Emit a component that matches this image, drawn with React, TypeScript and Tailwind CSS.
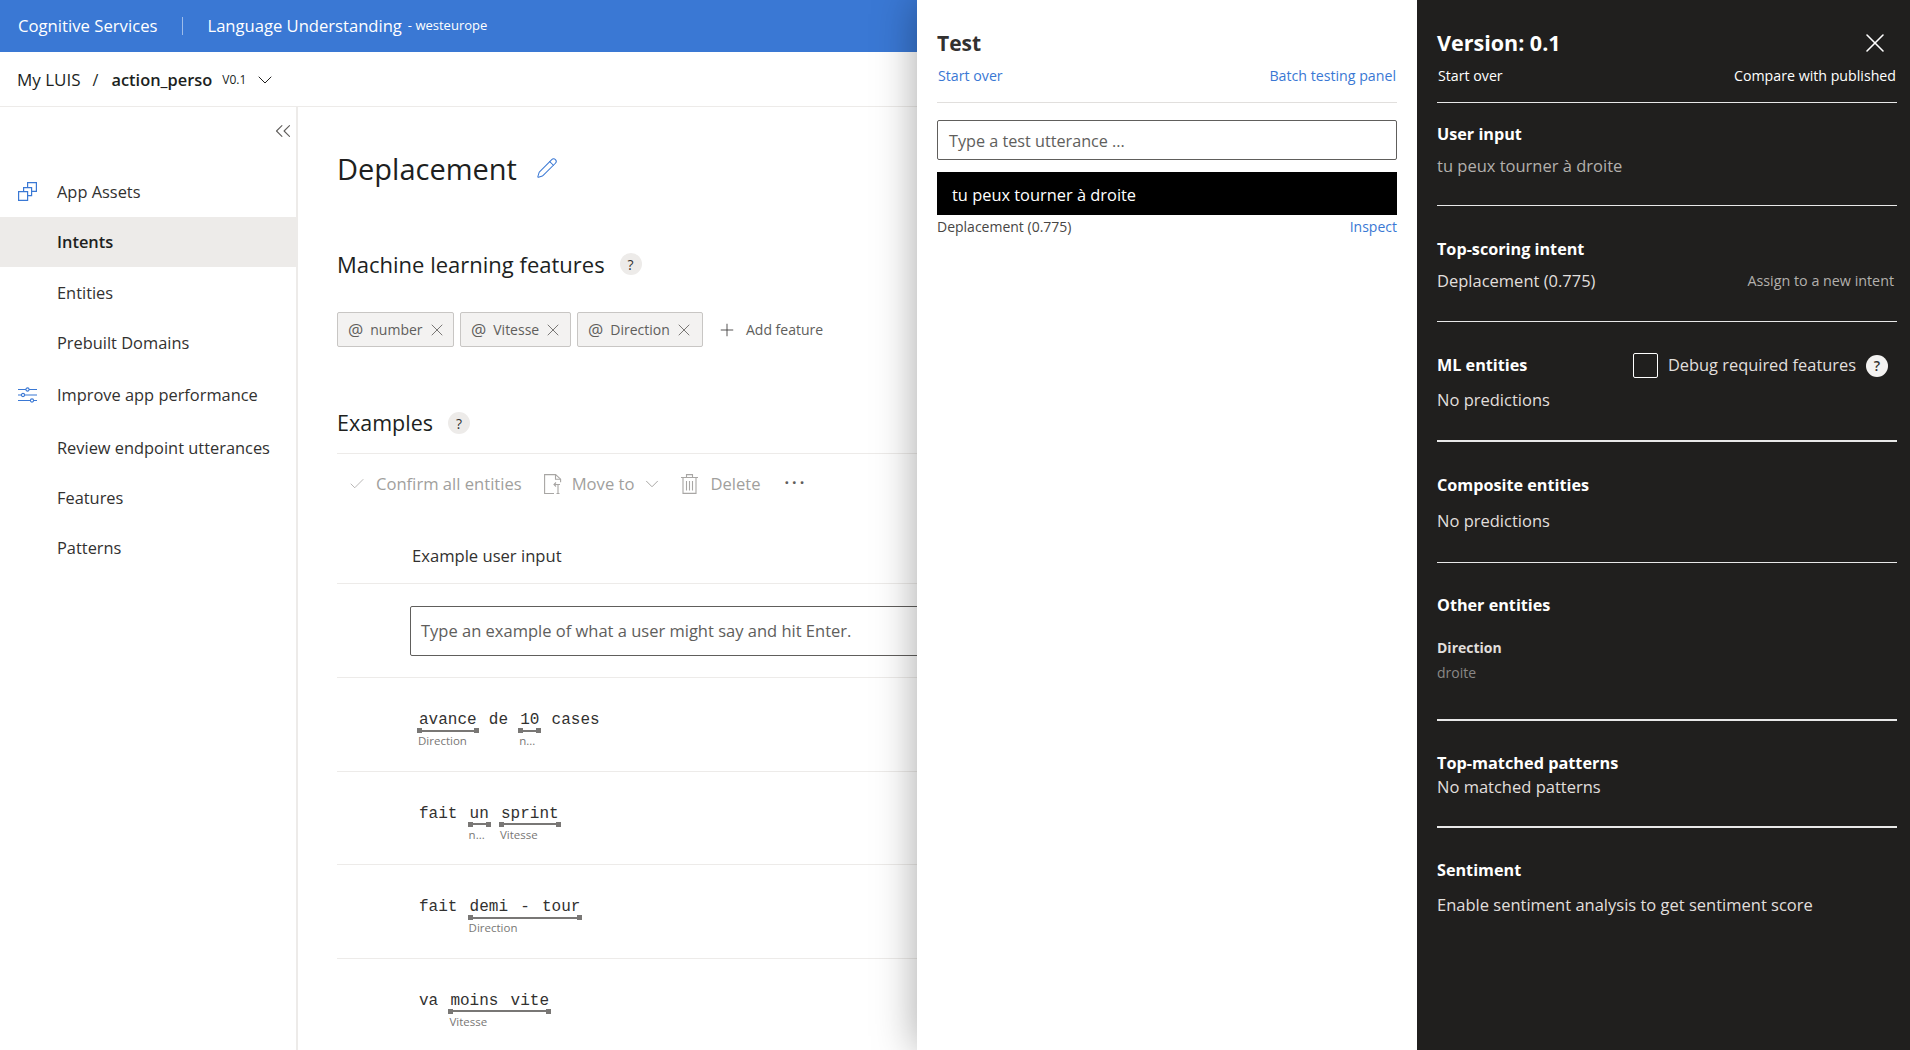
import { Check, ChevronDown, ChevronsLeft, Pencil, Plus, X } from "lucide-react";

type Segment = { words: string[]; label?: string };

const examples: Segment[][] = [
  [{ words: ["avance"], label: "Direction" }, { words: ["de"] }, { words: ["10"], label: "n..." }, { words: ["cases"] }],
  [{ words: ["fait"] }, { words: ["un"], label: "n..." }, { words: ["sprint"], label: "Vitesse" }],
  [{ words: ["fait"] }, { words: ["demi", "-", "tour"], label: "Direction" }],
  [{ words: ["va"] }, { words: ["moins", "vite"], label: "Vitesse" }],
];

function Help({ dark = false }: { dark?: boolean }) {
  return (
    <span
      className={
        dark
          ? "flex size-[22px] items-center justify-center rounded-full bg-[#f3f2f1] text-[14px] font-semibold text-[#323130]"
          : "flex size-[22px] items-center justify-center rounded-full bg-[#edebe9] text-[14px] text-[#323130]"
      }
    >
      ?
    </span>
  );
}

function AssetsIcon() {
  return (
    <svg viewBox="0 0 19 19" className="size-[19px]" fill="none" stroke="#3a78d4" strokeWidth="1.2" aria-hidden="true">
      <path d="M.6 9.6h9v8.8h-9z" />
      <path d="M5.6 9.6V5.6h8v8h-4" />
      <path d="M9.6 5.6V.6h8.8v8.8h-4.8" />
    </svg>
  );
}

function TuneIcon() {
  return (
    <svg viewBox="0 0 19 16" className="h-[16px] w-[19px]" fill="none" stroke="#3a78d4" strokeWidth="1.1" aria-hidden="true">
      <path d="M0 2.5h8M11 2.5h8M0 8h3.5M6.5 8H19M0 13.5h12.5M15.5 13.5H19" />
      <circle cx="9.5" cy="2.5" r="1.6" />
      <circle cx="5" cy="8" r="1.6" />
      <circle cx="14" cy="13.5" r="1.6" />
    </svg>
  );
}

function MoveIcon() {
  return (
    <svg viewBox="0 0 18 20" className="h-[20px] w-[18px]" fill="none" stroke="#a8a6a4" strokeWidth="1.1" aria-hidden="true">
      <path d="M10 19.5H.6V.6h11l5 4.6v3" />
      <path d="M11.5.6v4.6h5" />
      <path d="M14 19.5v-9M10.5 10.5H16M12 8.5l-2 2 2 2M12.5 19.5h3" />
    </svg>
  );
}

function TrashIcon() {
  return (
    <svg viewBox="0 0 17 20" className="h-[20px] w-[17px]" fill="none" stroke="#a8a6a4" strokeWidth="1.1" aria-hidden="true">
      <path d="M0 3.5h17M5.5 3.5V.6h6v2.9M2 3.5v15.9h13V3.5M5.5 7v9.5M8.5 7v9.5M11.5 7v9.5" />
    </svg>
  );
}

function Chip({ label, className }: { label: string; className: string }) {
  return (
    <div className={`flex h-[35px] items-center rounded-[2px] border border-[#c8c6c4] bg-[#f3f2f1] pl-[10px] text-[#605e5c] ${className}`}>
      <span className="text-[17px] leading-none">@</span>
      <span className="ml-[7px] text-[14px]">{label}</span>
      <X className="ml-[4px] size-[20px] text-[#605e5c]" strokeWidth={1} />
    </div>
  );
}

function ExampleRow({ segments, last }: { segments: Segment[]; last?: boolean }) {
  return (
    <div className={`flex h-[93.6px] items-start gap-[12.2px] pl-[82px] pt-[31px] ${last ? "" : "border-b border-[#edebe9]"}`}>
      {segments.map((segment, i) => (
        <div key={i} className="flex flex-col">
          <div className="flex h-[22px] gap-[12.2px] font-['Liberation_Mono',monospace] text-[16px] leading-[22px] text-[#323130]">
            {segment.words.map((word, j) => (
              <span key={j}>{word}</span>
            ))}
          </div>
          {segment.label && (
            <>
              <div className="-mx-[2px] -mt-[3px] flex h-[5px] items-center">
                <span className="size-[5px] bg-[#797775]" />
                <span className="h-[2px] flex-1 bg-[#797775]" />
                <span className="size-[5px] bg-[#797775]" />
              </div>
              <span className="-ml-[1px] mt-[1px] w-0 whitespace-nowrap text-[11.5px] leading-[14px] text-[#797775]">{segment.label}</span>
            </>
          )}
        </div>
      ))}
    </div>
  );
}

function NavItem({ label, className = "", icon, active }: { label: string; className?: string; icon?: React.ReactNode; active?: boolean }) {
  return (
    <div className={`flex h-[50px] items-center ${active ? "bg-[#edebe9] font-semibold text-[#201f1e]" : "text-[#323130]"} ${className}`}>
      <span className="flex w-[57px] justify-start pl-[18px]">{icon}</span>
      <span className="pt-[1px] text-[16.4px]">{label}</span>
    </div>
  );
}

function Sidebar() {
  return (
    <aside className="flex w-[298px] shrink-0 flex-col border-r-2 border-[#edebe9]">
      <div className="flex h-[59px] justify-end pt-[11px]">
        <ChevronsLeft className="size-[26px] text-[#605e5c]" strokeWidth={1} />
      </div>
      <NavItem label="App Assets" className="h-[51px]" icon={<AssetsIcon />} />
      <NavItem label="Intents" active />
      <NavItem label="Entities" className="mt-[1px]" />
      <NavItem label="Prebuilt Domains" />
      <NavItem label="Improve app performance" className="mt-[2px]" icon={<TuneIcon />} />
      <NavItem label="Review endpoint utterances" className="mt-[3px]" />
      <NavItem label="Features" />
      <NavItem label="Patterns" />
    </aside>
  );
}

function Main() {
  return (
    <main className="min-w-0 flex-1 overflow-hidden pl-[39px] pt-[41px] text-[#201f1e]">
      <div className="flex h-[40px] items-center">
        <h1 className="text-[29px] font-medium leading-none">Deplacement</h1>
        <Pencil className="ml-[19px] size-[22px] text-[#3a78d4]" strokeWidth={1.1} />
      </div>
      <div className="mt-[61px] flex h-[30px] items-center">
        <h2 className="text-[22px] font-medium leading-none">Machine learning features</h2>
        <span className="ml-[15px]"><Help /></span>
      </div>
      <div className="mt-[33px] flex items-center gap-[6px]">
        <Chip label="number" className="w-[117px]" />
        <Chip label="Vitesse" className="w-[111px]" />
        <Chip label="Direction" className="w-[126px]" />
        <Plus className="ml-[8px] size-[20px] text-[#323130]" strokeWidth={1} />
        <span className="ml-[3px] text-[14px] text-[#605e5c]">Add feature</span>
      </div>
      <div className="mt-[61px] flex h-[30px] items-center">
        <h2 className="text-[21.5px] font-medium leading-none">Examples</h2>
        <span className="ml-[15px]"><Help /></span>
      </div>
      <div className="mt-[15px] flex h-[61px] items-center border-t border-[#edebe9] pl-[11px] text-[#a19f9d]">
        <Check className="size-[18px]" strokeWidth={1} />
        <span className="ml-[10px] text-[16.6px]">Confirm all entities</span>
        <span className="ml-[22px]"><MoveIcon /></span>
        <span className="ml-[10px] text-[16.6px]">Move to</span>
        <ChevronDown className="ml-[7px] size-[22px]" strokeWidth={1} />
        <span className="ml-[18px]"><TrashIcon /></span>
        <span className="ml-[12px] text-[16.6px]">Delete</span>
        <span className="ml-[24px] mb-[4px] font-bold leading-none tracking-[3px] text-[#605e5c]">···</span>
      </div>
      <div className="flex h-[70px] items-center border-b border-[#edebe9] pl-[75px] pt-[16px] text-[16.6px] font-medium text-[#323130]">
        Example user input
      </div>
      <div className="flex h-[94px] items-center border-b border-[#edebe9] pl-[73px]">
        <div className="flex h-[50px] w-[900px] items-center rounded-[2px] border border-[#605e5c] pl-[10px] pt-[2px] text-[16.5px] text-[#605e5c]">
          Type an example of what a user might say and hit Enter.
        </div>
      </div>
      {examples.map((segments, i) => (
        <ExampleRow key={i} segments={segments} last={i === examples.length - 1} />
      ))}
    </main>
  );
}

function TestPanel() {
  return (
    <section className="flex w-[500px] flex-col bg-white px-[20px] pt-[27px] shadow-[0_0_40px_rgba(0,0,0,0.35)]">
      <h2 className="h-[32px] text-[21px] font-bold leading-[32px] text-[#323130]">Test</h2>
      <div className="flex h-[44px] items-start justify-between border-b border-[#e1dfdd] px-[1px] pt-[7px] text-[14.2px] leading-[20px] text-[#3a78d4]">
        <span>Start over</span>
        <span>Batch testing panel</span>
      </div>
      <div className="mt-[17px] flex h-[40px] items-center rounded-[2px] border border-[#605e5c] pl-[11px] pt-[2px] text-[16.2px] text-[#605e5c]">
        Type a test utterance ...
      </div>
      <div className="mt-[12px] flex h-[43px] items-center bg-black pl-[15px] pt-[3px] text-[16.4px] text-white">tu peux tourner à droite</div>
      <div className="flex h-[22px] items-center justify-between text-[14px]">
        <span className="text-[#484644]">Deplacement (0.775)</span>
        <span className="text-[#3a78d4]">Inspect</span>
      </div>
    </section>
  );
}

function InspectSection({ className, children }: { className: string; children: React.ReactNode }) {
  return <div className={`border-b border-[#e8e8e8] ${className}`}>{children}</div>;
}

function InspectPanel() {
  return (
    <section className="flex w-[493px] flex-col bg-[#201f1e] pl-[20px] pr-[13px] pt-[27px] text-white">
      <div className="flex h-[32px] items-center justify-between pr-[6px]">
        <h2 className="text-[21.5px] font-bold">Version: 0.1</h2>
        <X className="size-[32px]" strokeWidth={1.2} />
      </div>
      <div className="flex h-[44px] items-start justify-between border-b border-[#e8e8e8] px-[1px] pt-[7px] text-[14.2px] leading-[20px]">
        <span>Start over</span>
        <span>Compare with published</span>
      </div>
      <InspectSection className="h-[103px] pt-[20px]">
        <h3 className="text-[16.2px] font-bold leading-[22px]">User input</h3>
        <p className="mt-[10px] text-[16.5px] leading-[22px] text-[#b3b0ad]">tu peux tourner à droite</p>
      </InspectSection>
      <InspectSection className="h-[116px] pt-[32px]">
        <h3 className="text-[16.2px] font-bold leading-[22px]">Top-scoring intent</h3>
        <div className="mt-[10px] flex items-center justify-between pr-[3px] leading-[22px]">
          <span className="text-[16.5px] text-[#e1dfdd]">Deplacement (0.775)</span>
          <span className="text-[14.3px] text-[#b3b0ad]">Assign to a new intent</span>
        </div>
      </InspectSection>
      <InspectSection className="h-[120px] border-b-2 pt-[31px]">
        <div className="flex h-[25px] items-center">
          <h3 className="flex-1 text-[16.2px] font-bold">ML entities</h3>
          <span className="size-[25px] rounded-[2px] border border-white" />
          <span className="ml-[10px] text-[16.4px] text-[#e1dfdd]">Debug required features</span>
          <span className="ml-[10px] mr-[9px]"><Help dark /></span>
        </div>
        <p className="mt-[11px] text-[16.5px] leading-[22px] text-[#e1dfdd]">No predictions</p>
      </InspectSection>
      <InspectSection className="h-[121px] pt-[32px]">
        <h3 className="text-[16.2px] font-bold leading-[22px]">Composite entities</h3>
        <p className="mt-[14px] text-[16.5px] leading-[22px] text-[#e1dfdd]">No predictions</p>
      </InspectSection>
      <InspectSection className="h-[158px] border-b-2 pt-[31px]">
        <h3 className="text-[16.2px] font-bold leading-[22px]">Other entities</h3>
        <h4 className="mt-[22px] text-[14px] font-bold leading-[20px] text-[#e1dfdd]">Direction</h4>
        <p className="mt-[5px] text-[14px] leading-[20px] text-[#8a8886]">droite</p>
      </InspectSection>
      <InspectSection className="h-[107px] border-b-2 pt-[31px]">
        <h3 className="text-[16.3px] font-bold leading-[22px]">Top-matched patterns</h3>
        <p className="mt-[2px] text-[16.5px] leading-[22px] text-[#e1dfdd]">No matched patterns</p>
      </InspectSection>
      <div className="pt-[31px]">
        <h3 className="text-[16.2px] font-bold leading-[22px]">Sentiment</h3>
        <p className="mt-[13px] text-[16.5px] leading-[22px] text-[#e1dfdd]">Enable sentiment analysis to get sentiment score</p>
      </div>
    </section>
  );
}

export default function App() {
  return (
    <div className="relative flex h-[1050px] w-[1910px] flex-col overflow-hidden bg-white font-['Open_Sans',sans-serif]">
      <header className="flex h-[52px] shrink-0 items-center bg-[#3a78d4] pl-[18px] text-white">
        <span className="text-[16.7px]">Cognitive Services</span>
        <span className="ml-[25px] h-[18px] w-px bg-white/50" />
        <span className="ml-[24px] text-[16.6px]">Language Understanding</span>
        <span className="ml-[6px] text-[13px]">- westeurope</span>
      </header>
      <nav className="flex h-[55px] shrink-0 items-center border-b border-[#edebe9] pl-[17px] pt-[2px] text-[#201f1e]">
        <span className="text-[17px]">My LUIS</span>
        <span className="ml-[12px] text-[16px]">/</span>
        <span className="ml-[13px] text-[16.4px] font-semibold">action_perso</span>
        <span className="ml-[10px] text-[12px]">V0.1</span>
        <ChevronDown className="ml-[7px] size-[24px]" strokeWidth={1} />
      </nav>
      <div className="flex min-h-0 flex-1">
        <Sidebar />
        <Main />
      </div>
      <div className="absolute bottom-0 right-0 top-0 flex">
        <TestPanel />
        <InspectPanel />
      </div>
    </div>
  );
}
